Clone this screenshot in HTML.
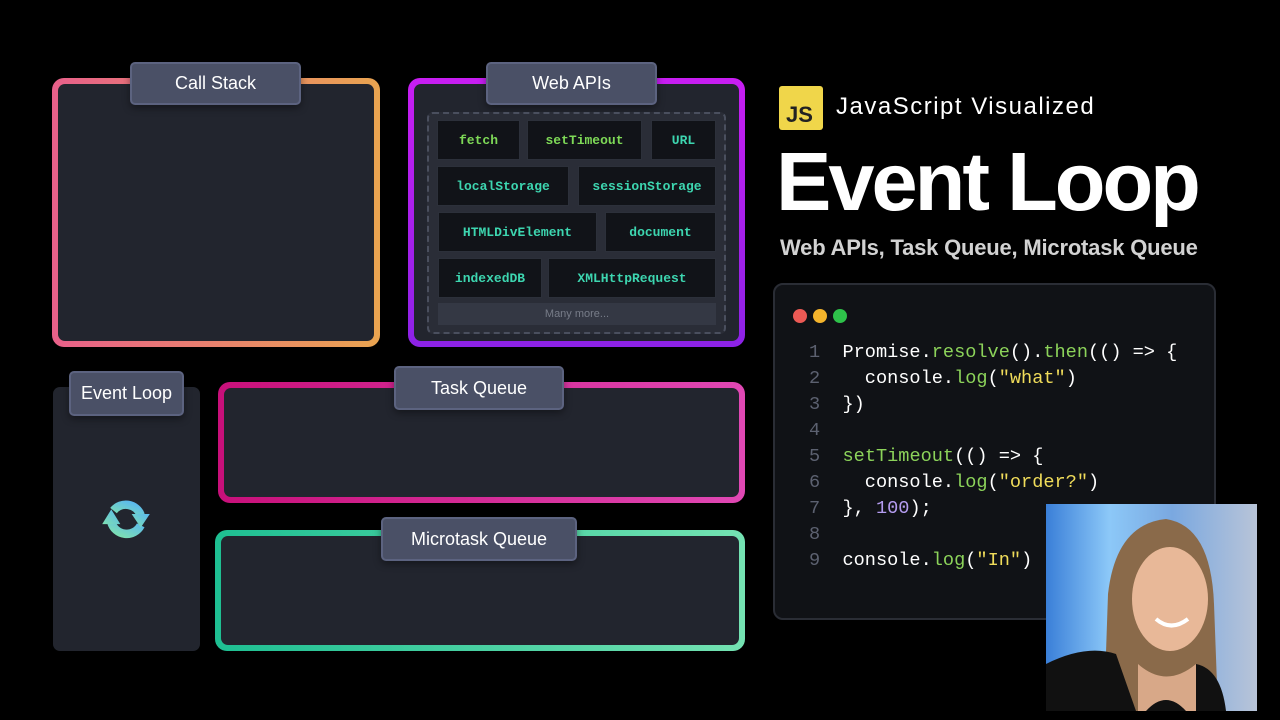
<!DOCTYPE html>
<html><head><meta charset="utf-8"><style>
*{margin:0;padding:0;box-sizing:border-box}
body{width:1280px;height:720px;background:#000;position:relative;overflow:hidden;font-family:"Liberation Sans",sans-serif}
.a{position:absolute}
.frame{position:absolute;border-radius:12px;padding:6px}
.frame>div{width:100%;height:100%;background:#22252e;border-radius:7px}
.lbl{position:absolute;background:#4a5066;border:2px solid #5c6380;border-radius:5px;color:#fff;font-size:18px;display:flex;align-items:center;justify-content:center;box-shadow:0 3px 8px rgba(0,0,0,.4)}
.cell{position:absolute;background:#111318;border:1px solid #2c303a;color:#3dd6b0;font-family:"Liberation Mono",monospace;font-size:13px;font-weight:bold;display:flex;align-items:center;justify-content:center}
.g{color:#7ed957}
.code{position:absolute;left:773px;top:283px;width:443px;height:337px;background:#101216;border:2px solid #2a2d35;border-radius:10px}
.ln{position:absolute;font-family:"Liberation Mono",monospace;font-size:18.6px;color:#fff;white-space:pre;line-height:26px}
.num{color:#5c6170}
.f{color:#8cd35a}.s{color:#f0dc5a}.n{color:#b49cf0}
</style></head><body>

<div class="frame" style="left:52px;top:78px;width:328px;height:269px;background:linear-gradient(90deg,#e8608a,#e9a450)"><div></div></div>
<div class="lbl" style="left:130px;top:62px;width:171px;height:43px">Call Stack</div>

<div class="frame" style="left:408px;top:78px;width:337px;height:269px;background:linear-gradient(180deg,#c81ef2,#8c22e6)"><div></div></div>
<div class="lbl" style="left:486px;top:62px;width:171px;height:43px">Web APIs</div>
<div class="a" style="left:427px;top:112px;width:299px;height:222px;border:2px dashed #4a4f5e;border-radius:6px;background:#2a2d37"></div>
<div class="cell g" style="left:437px;top:120px;width:83px;height:40px">fetch</div>
<div class="cell g" style="left:527px;top:120px;width:115px;height:40px">setTimeout</div>
<div class="cell" style="left:651px;top:120px;width:65px;height:40px">URL</div>
<div class="cell" style="left:437px;top:166px;width:132px;height:40px">localStorage</div>
<div class="cell" style="left:578px;top:166px;width:138px;height:40px">sessionStorage</div>
<div class="cell" style="left:438px;top:212px;width:159px;height:40px">HTMLDivElement</div>
<div class="cell" style="left:605px;top:212px;width:111px;height:40px">document</div>
<div class="cell" style="left:438px;top:258px;width:104px;height:40px">indexedDB</div>
<div class="cell" style="left:548px;top:258px;width:168px;height:40px">XMLHttpRequest</div>
<div class="a" style="left:438px;top:303px;width:278px;height:22px;background:#343844;color:#777c88;font-size:11px;display:flex;align-items:center;justify-content:center">Many more...</div>

<div class="a" style="left:53px;top:387px;width:147px;height:264px;background:#22252e;border-radius:7px"></div>
<div class="lbl" style="left:69px;top:371px;width:115px;height:45px">Event Loop</div>
<svg class="a" style="left:92px;top:490px" width="68" height="57" viewBox="0 0 60 50">
<defs><linearGradient id="lg" x1="0" y1="1" x2="1" y2="0"><stop offset="0" stop-color="#7ee0b0"/><stop offset="1" stop-color="#5ab8f0"/></linearGradient></defs>
<path d="M19 18 A14 14 0 0 1 43 22" stroke="url(#lg)" stroke-width="7.5" fill="none"/>
<path d="M43 31 A14 14 0 0 1 17 28" stroke="url(#lg)" stroke-width="7.5" fill="none"/>
<path d="M35 21 L51 21 L43 33 Z" fill="url(#lg)"/>
<path d="M9 30 L25 30 L17 17 Z" fill="url(#lg)"/>
</svg>

<div class="frame" style="left:218px;top:382px;width:527px;height:121px;background:linear-gradient(90deg,#c8107a,#e048b4)"><div></div></div>
<div class="lbl" style="left:394px;top:366px;width:170px;height:44px">Task Queue</div>

<div class="frame" style="left:215px;top:530px;width:530px;height:121px;background:linear-gradient(90deg,#1ebf92,#74e2b2)"><div></div></div>
<div class="lbl" style="left:381px;top:517px;width:196px;height:44px">Microtask Queue</div>

<div class="a" style="left:779px;top:86px;width:44px;height:44px;background:#f0d64a;border-radius:3px;color:#222;font-weight:bold;font-size:22px;padding:18px 0 0 7px;line-height:22px">JS</div>
<div class="a" style="left:836px;top:93px;color:#fff;font-size:24px;letter-spacing:1.5px">JavaScript Visualized</div>
<div class="a" style="left:776px;top:134px;color:#fff;font-size:83px;font-weight:bold;letter-spacing:-3px;line-height:96px">Event Loop</div>
<div class="a" style="left:780px;top:235px;color:#d2d2d2;font-size:22px;font-weight:bold;letter-spacing:-0.2px">Web APIs, Task Queue, Microtask Queue</div>

<div class="code">
<div class="a" style="left:18px;top:24px;width:14px;height:14px;border-radius:50%;background:#ec5a55"></div>
<div class="a" style="left:38px;top:24px;width:14px;height:14px;border-radius:50%;background:#f4b42c"></div>
<div class="a" style="left:58px;top:24px;width:14px;height:14px;border-radius:50%;background:#2ec24a"></div>
</div>
<div class="ln" style="left:809px;top:340px"><span class="num">1</span>  Promise.<span class="f">resolve</span>().<span class="f">then</span>(() =&gt; {
<span class="num">2</span>    console.<span class="f">log</span>(<span class="s">"what"</span>)
<span class="num">3</span>  })
<span class="num">4</span>
<span class="num">5</span>  <span class="f">setTimeout</span>(() =&gt; {
<span class="num">6</span>    console.<span class="f">log</span>(<span class="s">"order?"</span>)
<span class="num">7</span>  }, <span class="n">100</span>);
<span class="num">8</span>
<span class="num">9</span>  console.<span class="f">log</span>(<span class="s">"In"</span>)</div>

<svg class="a" style="left:1046px;top:504px" width="211" height="207" viewBox="0 0 211 207">
<defs><linearGradient id="bg" x1="0" x2="1"><stop offset="0" stop-color="#3a7fd8"/><stop offset=".3" stop-color="#8cc8f8"/><stop offset=".6" stop-color="#7aa8e0"/><stop offset="1" stop-color="#b8c4d8"/></linearGradient></defs>
<rect width="211" height="207" fill="url(#bg)"/>
<path d="M58 207 L62 90 Q70 20 120 15 Q165 22 168 100 L172 207 Z" fill="#8a6a4a"/>
<ellipse cx="124" cy="95" rx="38" ry="52" fill="#e8b898"/>
<path d="M0 160 Q40 140 70 150 L90 207 L0 207 Z" fill="#111"/>
<path d="M150 160 Q175 165 180 207 L140 207 Z" fill="#111"/>
<path d="M92 160 Q120 185 150 160 L150 207 L92 207 Z" fill="#d8a888"/>
<path d="M100 207 Q120 185 140 207 Z" fill="#111"/>
<path d="M110 115 Q125 128 142 115" stroke="#fff" stroke-width="4" fill="none"/>
</svg>
</body></html>
